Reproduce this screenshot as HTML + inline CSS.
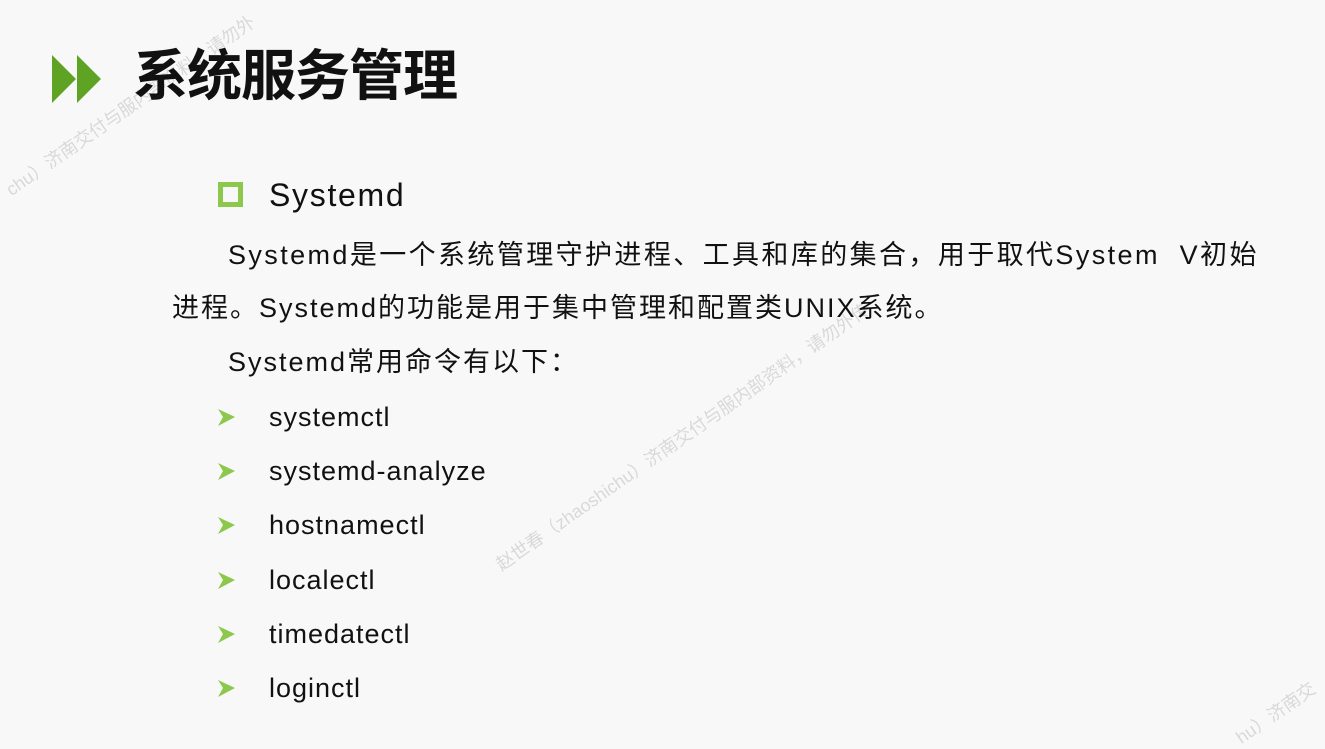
<!DOCTYPE html>
<html><head><meta charset="utf-8"><style>
html,body{margin:0;padding:0}
body{width:1325px;height:721px;background:#f8f8f8;position:relative;overflow:hidden;font-family:"Liberation Sans","Noto Sans CJK SC",sans-serif;color:#111}
.a{position:absolute;white-space:nowrap}
.t{font-size:27px;line-height:30px}
.b{font-size:27px;line-height:30px;letter-spacing:1px}
.p{letter-spacing:2px}
.wm{position:absolute;color:rgba(0,0,0,0.13);font-size:18px;transform:rotate(-35deg);transform-origin:left top;white-space:nowrap}
</style></head><body>
<svg class="a" style="left:52px;top:55px" width="50" height="48" viewBox="0 0 50 48">
<polygon points="0,0 24,24 0,48" fill="#5fa324"/><polygon points="25,0 49,24 25,48" fill="#5fa324"/></svg>
<div class="a" style="left:133px;top:44px;font-size:55px;font-weight:bold;line-height:64px;letter-spacing:-1px">系统服务管理</div>
<div class="a" style="left:218px;top:182px;width:15px;height:15px;border:5px solid #8cc84b"></div>
<div class="a" style="left:269px;top:177px;font-size:32px;line-height:36px;letter-spacing:1.7px">Systemd</div>
<div class="a t" style="left:228px;top:240px;letter-spacing:2.4px">Systemd是一个系统管理守护进程、工具和库的集合，用于取代System&nbsp; V初始</div>
<div class="a t p" style="left:172px;top:293px">进程。Systemd的功能是用于集中管理和配置类UNIX系统。</div>
<div class="a t p" style="left:228px;top:347px">Systemd常用命令有以下：</div>
<svg width="0" height="0" style="position:absolute"><defs><g id="ar"><polygon points="0,0 17,8 0,17 5,8" fill="#8cc84b"/></g></defs></svg>
<div class="a" style="left:218px;top:409px"><svg width="18" height="17"><use href="#ar"/></svg></div>
<div class="a b" style="left:269px;top:402px">systemctl</div>
<div class="a" style="left:218px;top:463px"><svg width="18" height="17"><use href="#ar"/></svg></div>
<div class="a b" style="left:269px;top:456px">systemd-analyze</div>
<div class="a" style="left:218px;top:517px"><svg width="18" height="17"><use href="#ar"/></svg></div>
<div class="a b" style="left:269px;top:510px">hostnamectl</div>
<div class="a" style="left:218px;top:572px"><svg width="18" height="17"><use href="#ar"/></svg></div>
<div class="a b" style="left:269px;top:565px">localectl</div>
<div class="a" style="left:218px;top:626px"><svg width="18" height="17"><use href="#ar"/></svg></div>
<div class="a b" style="left:269px;top:619px">timedatectl</div>
<div class="a" style="left:218px;top:680px"><svg width="18" height="17"><use href="#ar"/></svg></div>
<div class="a b" style="left:269px;top:673px">loginctl</div>
<div class="wm" style="left:0px;top:180px">chu）济南交付与服内部资料，请勿外</div>
<div class="wm" style="left:490px;top:555px">赵世春（zhaoshichu）济南交付与服内部资料，请勿外传</div>
<div class="wm" style="left:1230px;top:728px">hu）济南交</div>
</body></html>
